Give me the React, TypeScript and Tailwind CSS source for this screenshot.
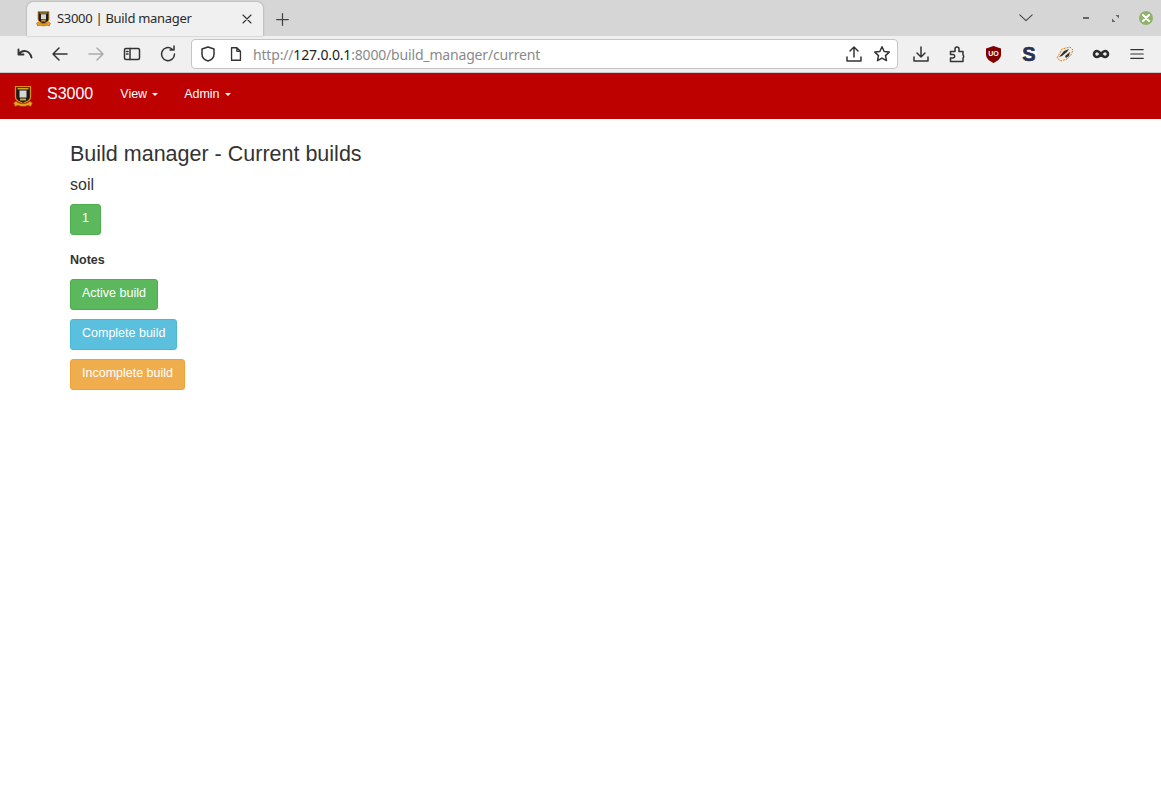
import React from 'react';

const UI_FONT = "font-['Noto_Sans',sans-serif]";

// University crest, used on both the tab and the navbar
const Crest: React.FC<{ w: number; h: number; className?: string }> = ({ w, h, className }) => (
  <svg width={w} height={h} viewBox="0 0 20 22" className={className}>
    <path d="M2.500 .700h15v10.500c0 2.800-3.500 4.800-7.500 6.300-4-1.500-7.500-3.500-7.500-6.300z" fill="#1a1a1a" stroke="#e08a1e" strokeWidth="1.300" />
    <rect x="6.500" y="4.500" width="7" height="7" fill="#d6d6d6" />
    <path d="M4.500 2h11v1.500h-11z" fill="#d4a72c" />
    <path d="M7 12.500h6v2H7z" fill="#d4a72c" />
    <path d="M.500 17l2.500-2c3 3.500 11 3.500 14 0l2.500 2-1.500 3.500-3-1c-3 1.200-7 1.200-10 0l-3 1z" fill="#e5a51e" stroke="#a5320f" strokeWidth="0.700" />
  </svg>
);

const Icon: React.FC<{ w?: number; h?: number; children: React.ReactNode; className?: string }> = ({ w = 18, h = 18, children, className }) => (
  <svg width={w} height={h} viewBox="0 0 18 18" fill="none" stroke="currentColor" strokeWidth="1.500" strokeLinecap="round" strokeLinejoin="round" className={className}>
    {children}
  </svg>
);

const Tab = () => (
  <div className="ml-[27px] mt-[2px] flex h-[34px] w-[236px] items-center rounded-t-[6px] bg-[#f0f0f0] pl-[9px] pr-[10px] shadow-[0_0_2px_rgba(0,0,0,0.35)]">
    <Crest w={15} h={16} />
    <span className={`ml-[6px] flex-1 text-[13px] tracking-[-0.3px] text-[#2b2b2b] ${UI_FONT}`}>S3000 | Build manager</span>
    <Icon w={12} h={12} className="text-[#333]">
      <path d="M3 3l12 12M15 3L3 15" strokeWidth="1.700" />
    </Icon>
  </div>
);

const TabStrip = () => (
  <div className="flex h-[36px] items-stretch bg-[#d6d6d6]">
    <Tab />
    <div className="ml-[12px] flex items-center pt-[2px] text-[#444]">
      <Icon w={15} h={15}>
        <path d="M9 2v14M2 9h14" />
      </Icon>
    </div>
    <div className="flex-1" />
    <div className="flex items-center pr-[8px] text-[#444]">
      <Icon w={16} h={16}>
        <path d="M2 5.500l7 6.500 7-6.500" strokeWidth="1.200" />
      </Icon>
      <div className="ml-[49px] h-[2px] w-[6px] bg-[#666]" />
      <div className="ml-[23px] flex h-[7px] w-[7px] items-center justify-center">
        <svg width="7" height="7" viewBox="0 0 7 7">
          <path d="M7 0v3.500L3.500 0zM0 7V3.500L3.500 7z" fill="#666" />
        </svg>
      </div>
      <div className="ml-[20px] flex h-[14px] w-[14px] items-center justify-center rounded-full bg-[#8fb36d]">
        <svg width="8" height="8" viewBox="0 0 8 8">
          <path d="M1 1l6 6M7 1L1 7" stroke="#fff" strokeWidth="2" strokeLinecap="round" />
        </svg>
      </div>
    </div>
  </div>
);

const AddressBar = () => (
  <div className="ml-[14px] flex h-[30px] w-[707px] items-center rounded-[4px] border border-[#c4c4c4] bg-white pl-[7px] pr-[6px]">
    <Icon className="text-[#333]">
      <path d="M9 2l6 2v5c0 3.500-2.500 6-6 7-3.500-1-6-3.500-6-7V4z" />
    </Icon>
    <Icon w={16} h={16} className="ml-[11px] text-[#333]">
      <path d="M4 2h6l4 4v10H4zM10 2v4h4" />
    </Icon>
    <span className={`ml-[9px] flex-1 text-[14px] tracking-[-0.17px] text-[#8a8a8a] ${UI_FONT}`}>
      http://<span className="text-[#222]">127.0.0.1</span>:8000/build_manager/current
    </span>
    <Icon className="text-[#333]">
      <path d="M9 12V2M5 6l4-4 4 4M2 12v4h14v-4" />
    </Icon>
    <Icon className="ml-[10px] text-[#333]">
      <path d="M9 1.800l2.200 4.700 5 .6-3.700 3.500 1 5L9 13.100l-4.500 2.500 1-5L1.800 7.100l5-.6z" />
    </Icon>
  </div>
);

const Toolbar = () => (
  <div className="flex h-[36px] items-center bg-[#f0f0f0] pl-[16px] text-[#333]">
    <Icon>
      <path d="M2.500 4.500V9.500h5M2.500 9.500C6 4.500 13.500 4.500 15.500 12.500" strokeWidth="1.900" />
    </Icon>
    <Icon className="ml-[17px]">
      <path d="M16 9H2M8 3L2 9l6 6" />
    </Icon>
    <Icon className="ml-[18px] text-[#aaa]">
      <path d="M2 9h14M10 3l6 6-6 6" />
    </Icon>
    <Icon className="ml-[18px]">
      <rect x="1.500" y="3.500" width="15" height="11" rx="1.500" />
      <path d="M7 3.500v11M3.500 6.500H5M3.500 9H5" />
    </Icon>
    <Icon className="ml-[18px]">
      <path d="M15.500 9A6.500 6.500 0 1 1 13 4M15 1v4h-4" />
    </Icon>
    <AddressBar />
    <Icon className="ml-[14px]">
      <path d="M9 2v10M5 8l4 4 4-4M2 12v4h14v-4" />
    </Icon>
    <Icon className="ml-[18px]">
      <path d="M2.500 6.500H7V4a2 2 0 0 1 4 0v2.500h4V10a2 2 0 0 1 0 3v3.500H2.500v-3.500H5a1.700 1.700 0 0 0 0-3.500H2.500z" strokeWidth="1.500" />
    </Icon>
    {/* uBlock */}
    <svg width="15" height="17" viewBox="0 0 16 18" className="ml-[20px]">
      <path d="M8 0l8 2.500V9c0 4-3.500 7-8 9-4.500-2-8-5-8-9V2.500z" fill="#800000" />
      <text x="8" y="10.500" textAnchor="middle" fill="#fff" fontSize="7.500" fontWeight="700" fontFamily="'Liberation Sans',sans-serif">UO</text>
    </svg>
    {/* S extension */}
    <div className="ml-[20px] flex h-[16px] w-[16px] items-center justify-center rounded-full bg-white text-[20px] leading-none font-bold text-[#2d3150] [-webkit-text-stroke:0.7px_#2d3150] font-['Liberation_Sans',sans-serif]">S</div>
    {/* badger */}
    <svg width="18" height="16" viewBox="0 0 18 16" className="ml-[19px]">
      <path d="M1 12l3-5 2-4 8-2 3 3-2 5-4 4-6 2z" fill="#f0ece2" stroke="#e07b20" strokeWidth="1" strokeDasharray="2 1" />
      <path d="M3 11l5-6 5-2-2 3-5 4zM9 10l5-4-1 4-3 2z" fill="#333" />
    </svg>
    {/* infinity mask */}
    <svg width="18" height="10" viewBox="0 0 18 10" className="ml-[18px]">
      <path d="M5 2c2 0 3 2 4 3 1-1 2-3 4-3a3 3 0 0 1 0 6c-2 0-3-2-4-3-1 1-2 3-4 3a3 3 0 0 1 0-6z" fill="none" stroke="#2b2b2b" strokeWidth="2.600" />
    </svg>
    <Icon w={16} h={16} className="ml-[19px]">
      <path d="M2 4h14M2 9h14M2 14h14" strokeWidth="1.300" />
    </Icon>
  </div>
);

const Caret = () => <span className="ml-[5px] inline-block h-0 w-0 border-x-[3px] border-t-[3px] border-x-transparent border-t-white align-middle" />;

const Navbar = () => (
  <nav className="flex h-[46px] items-center bg-[#bd0000] pl-[13px] text-white">
    <Crest w={20} h={22} className="mt-[2px]" />
    <span className="ml-[14px] pb-[4px] text-[16px]">S3000</span>
    <span className="ml-[27px] pb-[4px] text-[12.5px]">View<Caret /></span>
    <span className="ml-[26px] pb-[4px] text-[12.5px]">Admin<Caret /></span>
  </nav>
);

const Btn: React.FC<{ color: string; children: React.ReactNode }> = ({ color, children }) => (
  <button className={`block rounded-[3px] border px-[11px] pt-[5px] pb-[7px] text-[12.5px] leading-[17px] text-white ${color}`}>{children}</button>
);

export default function App() {
  return (
    <div className="min-h-[805px] bg-white font-['Liberation_Sans',sans-serif] text-[#333]">
      <TabStrip />
      <Toolbar />
      <div className="h-px bg-[#c8c8c8]" />
      <Navbar />
      <main className="px-[70px]">
        <h3 className="mt-[22px] text-[21.5px] leading-[26px]">Build manager - Current builds</h3>
        <h4 className="mt-[9px] text-[16px] leading-[18px]">soil</h4>
        <div className="mt-[10px]">
          <Btn color="bg-[#5cb85c] border-[#4cae4c]">1</Btn>
        </div>
        <p className="mt-[17px] text-[12.5px] leading-[17px] font-bold">Notes</p>
        <div className="mt-[10px] flex flex-col items-start gap-[9px]">
          <Btn color="bg-[#5cb85c] border-[#4cae4c]">Active build</Btn>
          <Btn color="bg-[#5bc0de] border-[#46b8da]">Complete build</Btn>
          <Btn color="bg-[#f0ad4e] border-[#eea236]">Incomplete build</Btn>
        </div>
      </main>
    </div>
  );
}
